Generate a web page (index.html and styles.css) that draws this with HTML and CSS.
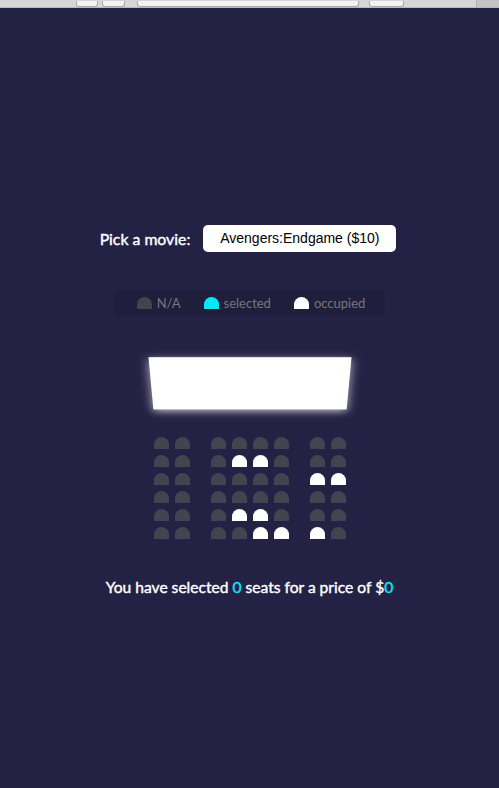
FILE: index.html
```html
<!DOCTYPE html>
<html lang="en">
<head>
<meta charset="UTF-8">
<title>Movie Seat Booking</title>
<link rel="stylesheet" href="styles.css">
</head>
<body>
<div class="chrome">
  <span class="cbtn cbtn-a"></span>
  <span class="cbtn cbtn-b"></span>
  <span class="cbtn cbtn-url"></span>
  <span class="cbtn cbtn-c"></span>
  <span class="chrome-side"></span>
</div>
<main class="app">
  <div class="movie-container">
    <label>Pick a movie:</label>
    <span class="select">Avengers:Endgame ($10)</span>
  </div>

  <ul class="showcase">
    <li><div class="seat"></div><small>N/A</small></li>
    <li><div class="seat selected"></div><small>selected</small></li>
    <li><div class="seat occupied"></div><small>occupied</small></li>
  </ul>

  <div class="container">
    <div class="screen"></div>
    <div class="row">
      <div class="seat"></div><div class="seat"></div><div class="seat"></div><div class="seat"></div><div class="seat"></div><div class="seat"></div><div class="seat"></div><div class="seat"></div>
    </div>
    <div class="row">
      <div class="seat"></div><div class="seat"></div><div class="seat"></div><div class="seat occupied"></div><div class="seat occupied"></div><div class="seat"></div><div class="seat"></div><div class="seat"></div>
    </div>
    <div class="row">
      <div class="seat"></div><div class="seat"></div><div class="seat"></div><div class="seat"></div><div class="seat"></div><div class="seat"></div><div class="seat occupied"></div><div class="seat occupied"></div>
    </div>
    <div class="row">
      <div class="seat"></div><div class="seat"></div><div class="seat"></div><div class="seat"></div><div class="seat"></div><div class="seat"></div><div class="seat"></div><div class="seat"></div>
    </div>
    <div class="row">
      <div class="seat"></div><div class="seat"></div><div class="seat"></div><div class="seat occupied"></div><div class="seat occupied"></div><div class="seat"></div><div class="seat"></div><div class="seat"></div>
    </div>
    <div class="row">
      <div class="seat"></div><div class="seat"></div><div class="seat"></div><div class="seat"></div><div class="seat occupied"></div><div class="seat occupied"></div><div class="seat occupied"></div><div class="seat"></div>
    </div>
  </div>

  <p class="text">You have selected <span>0</span> seats for a price of $<span>0</span></p>
</main>
</body>
</html>
```

FILE: styles.css
```css
* { box-sizing: border-box; }

html, body {
  margin: 0;
  padding: 0;
}

body {
  background-color: #242244;
  color: #fff;
  font-family: "Lato", "Noto Sans", sans-serif;
  overflow: hidden;
}

.chrome {
  height: 8px;
  background: #d6d6d6;
  border-bottom: 1px solid #b8b8b8;
  display: flex;
  align-items: flex-end;
}

.cbtn {
  display: block;
  height: 6px;
  border: 1px solid #aaa;
  border-top: 0;
  border-radius: 0 0 3px 3px;
  background: #f2f2f2;
}
.cbtn-a { width: 22px; margin-left: 76px; }
.cbtn-b { width: 23px; margin-left: 4px; }
.cbtn-url { width: 222px; margin-left: 12px; }
.cbtn-c { width: 35px; margin-left: 10px; }
.chrome-side {
  margin-left: auto;
  width: 23px;
  height: 8px;
  background: #c4c4c4;
  border-left: 1px solid #b0b0b0;
}

.app {
  height: 780px;
  display: flex;
  flex-direction: column;
  align-items: center;
  justify-content: center;
  padding-top: 10px;
}

.movie-container {
  margin: 20px 3px 20px 0;
  display: flex;
  align-items: center;
  font-size: 15.8px;
  -webkit-text-stroke: 0.4px #fff;
}

.select {
  background-color: #fff;
  color: #000;
  border-radius: 5px;
  font-family: "Liberation Sans", Arial, sans-serif;
  font-weight: 400;
  font-size: 14px;
  line-height: 17px;
  margin-left: 13px;
  padding: 5px 15px;
  width: 193px;
  height: 27px;
  text-align: center;
  -webkit-text-stroke: 0;
}

.showcase {
  background: rgba(0, 0, 0, 0.1);
  padding: 5px 10px;
  margin: 18px 0 18px;
  border-radius: 5px;
  color: #777;
  list-style-type: none;
  display: flex;
  justify-content: space-between;
  height: 26px;
}

.showcase li {
  display: flex;
  align-items: center;
  justify-content: center;
  margin: 0 10px;
}

.showcase li small {
  margin-left: 2px;
  font-size: 13px;
}

.container {
  perspective: 1000px;
  margin-bottom: 30px;
}

.seat {
  background-color: #444451;
  height: 12px;
  width: 15px;
  margin: 3px;
  border-top-left-radius: 10px;
  border-top-right-radius: 10px;
}

.seat.selected { background-color: #0de6f6; }
.seat.occupied { background-color: #fff; }

.row .seat:nth-of-type(2) { margin-right: 18px; }
.row .seat:nth-last-of-type(2) { margin-left: 18px; }

.row { display: flex; }

.screen {
  background-color: #fff;
  height: 70px;
  width: 100%;
  margin: 15px 0;
  transform: rotateX(-45deg);
  box-shadow: 0 3px 10px rgba(255, 255, 255, 0.7);
}

p.text {
  margin: 6px 0 5px;
  font-size: 15.6px;
  -webkit-text-stroke: 0.4px #fff;
}

p.text span { color: #0de6f6; -webkit-text-stroke-color: #0de6f6; }
```
